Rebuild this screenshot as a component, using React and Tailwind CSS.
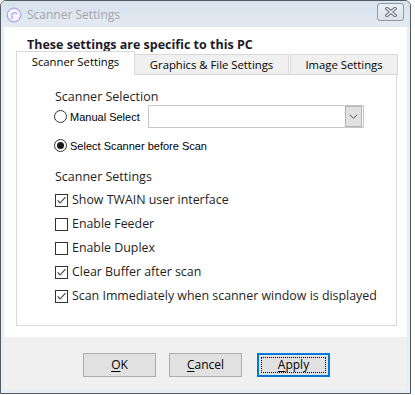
import React from "react";

const ui = "font-['Open_Sans',sans-serif]";
const ms = "font-['Liberation_Sans',Arial,sans-serif]";

function CheckBox({ checked, label }) {
  return (
    <div className="flex items-center h-[24px] ml-px">
      <span className="w-[13px] h-[13px] border border-[#333333] bg-white flex items-center justify-center shrink-0">
        {checked && (
          <svg viewBox="0 0 11 11" className="w-[11px] h-[11px]">
            <path d="M1.6 5.4 L4.1 8 L9.4 2.2" fill="none" stroke="#3a3a3a" strokeWidth="1.1" />
          </svg>
        )}
      </span>
      <span className={`${ui} ml-[4px] text-[12.4px] leading-[16px] text-[#1e1e1e]`}>{label}</span>
    </div>
  );
}

function Radio({ checked, label }) {
  return (
    <div className="flex items-center">
      <span className="w-[13px] h-[13px] rounded-full border border-[#333333] bg-white flex items-center justify-center shrink-0">
        {checked && <span className="w-[7px] h-[7px] rounded-full bg-[#1a1a1a]" />}
      </span>
      <span className={`${ms} ml-[3px] text-[11px] leading-[14px] text-black`}>{label}</span>
    </div>
  );
}

function Button({ children, focused }) {
  return (
    <button
      className={`relative w-[73px] h-[24px] bg-[#e1e1e1] flex items-center justify-center ${ui} text-[12px] text-black ${
        focused ? "border-2 border-[#0078d7]" : "border border-[#adadad]"
      }`}
    >
      {focused && <span className="absolute inset-[2px] border border-dotted border-black" />}
      {children}
    </button>
  );
}

export default function App() {
  return (
    <div className="w-[415px] h-[395px] bg-white">
      <div className="w-[411px] h-[394px] border border-[#555a60] rounded-t-[6px] bg-[#e8eef5] flex flex-col overflow-hidden">
        {/* Title bar */}
        <div className="h-[26px] flex items-center pl-[5px] pr-[6px] bg-linear-to-b from-[#d8e2ed] to-[#e3eaf2]">
          <svg viewBox="0 0 16 16" className="w-[16px] h-[16px] mt-[1px]">
            <circle cx="8" cy="8" r="6.8" fill="#f4f3ff" stroke="#a9a6ec" strokeWidth="1.2" />
            <path d="M6 12 V7.4 A3 3 0 0 1 11.2 6.8" fill="none" stroke="#a9a6ec" strokeWidth="1.3" />
          </svg>
          <span className={`${ui} ml-[5px] text-[12px] text-[#a2a6ab] mt-[1px]`}>Scanner Settings</span>
          <div className="ml-auto w-[27px] h-[18px] mt-[-4px] rounded-[3px] border border-[#8e99a6] bg-linear-to-b from-[#e9eef4] to-[#dce4ec] flex items-center justify-center">
            <svg viewBox="0 0 12 10" className="w-[12px] h-[10px]">
              <path d="M2 1.5 L10 8.5 M10 1.5 L2 8.5" stroke="#5f6b78" strokeWidth="3.4" strokeLinecap="square" />
              <path d="M2 1.5 L10 8.5 M10 1.5 L2 8.5" stroke="#f4f6f8" strokeWidth="1.4" strokeLinecap="square" />
            </svg>
          </div>
        </div>

        {/* Body */}
        <div className="flex-1 mx-[3px] mb-[3px] bg-white flex flex-col">
          <div className="h-[24px] pl-[23px] pt-[4px]">
            <span className={`${ui} font-bold text-[12.5px] leading-[18px] text-[#1c1c28]`}>
              These settings are specific to this PC
            </span>
          </div>

          {/* Tabs */}
          <div className="flex items-end ml-[12px] h-[24px] relative z-10 mb-[-1px]">
            <div className={`w-[119px] h-[24px] bg-white border border-b-0 border-[#d9d9d9] flex items-center justify-center pb-[2px] ${ui} text-[11.3px] text-black`}>
              Scanner Settings
            </div>
            <div className={`w-[154px] h-[21px] bg-[#f0f0f0] border border-l-0 border-[#d9d9d9] flex items-center justify-center pt-[1px] ${ui} text-[11.3px] text-black`}>
              Graphics &amp; File Settings
            </div>
            <div className={`w-[108px] h-[21px] ml-px bg-[#f0f0f0] border border-[#d9d9d9] flex items-center justify-center pt-[1px] ${ui} text-[11.3px] text-black`}>
              Image Settings
            </div>
          </div>

          {/* Panel */}
          <div className="ml-[12px] w-[381px] h-[252px] border border-[#d9d9d9] bg-white pl-[37px] pt-[14px] flex flex-col">
            <div className={`${ui} ml-px text-[12.5px] leading-[16px] text-[#1e1e1e]`}>Scanner Selection</div>
            <div className="flex items-center h-[23px]">
              <div className="w-[94px]">
                <Radio label="Manual Select" />
              </div>
              <div className="w-[216px] h-[23px] border border-[#c8c8c8] bg-white flex justify-end">
                <div className="w-[17px] h-full mr-px bg-[#e1e1e1] border border-[#b4b4b4] flex items-center justify-center">
                  <svg viewBox="0 0 9 5" className="w-[9px] h-[5px]">
                    <path d="M0.8 0.8 L4.5 4.2 L8.2 0.8" fill="none" stroke="#505050" strokeWidth="1" />
                  </svg>
                </div>
              </div>
            </div>
            <div className="mt-[7px] h-[21px] flex items-center">
              <Radio checked label="Select Scanner before Scan" />
            </div>
            <div className={`${ui} mt-[13px] ml-px text-[12.5px] leading-[16px] text-[#1e1e1e]`}>Scanner Settings</div>
            <div className="mt-[3px] flex flex-col">
              <CheckBox checked label="Show TWAIN user interface" />
              <CheckBox label="Enable Feeder" />
              <CheckBox label="Enable Duplex" />
              <CheckBox checked label="Clear Buffer after scan" />
              <CheckBox checked label="Scan Immediately when scanner window is displayed" />
            </div>
          </div>

          {/* Footer */}
          <div className="mt-[11px] flex-1 bg-[#f0f0f0] flex items-start pt-[16px] pl-[79px]">
            <Button>
              <span><span className="underline underline-offset-2">O</span>K</span>
            </Button>
            <div className="ml-[13px]">
              <Button>
                <span><span className="underline underline-offset-2">C</span>ancel</span>
              </Button>
            </div>
            <div className="ml-[15px]">
              <Button focused>
                <span><span className="underline underline-offset-2">A</span>pply</span>
              </Button>
            </div>
          </div>
        </div>
      </div>
    </div>
  );
}
